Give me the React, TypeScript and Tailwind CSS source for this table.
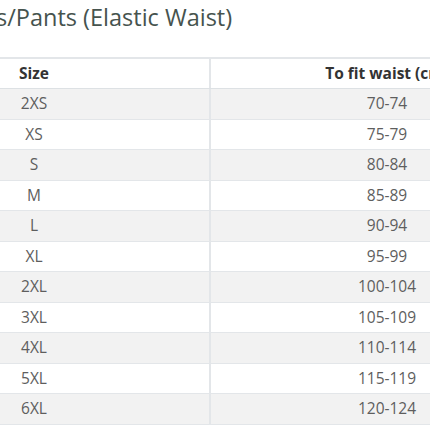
import React from "react";

const rows = [
  ["2XS", "70-74"],
  ["XS", "75-79"],
  ["S", "80-84"],
  ["M", "85-89"],
  ["L", "90-94"],
  ["XL", "95-99"],
  ["2XL", "100-104"],
  ["3XL", "105-109"],
  ["4XL", "110-114"],
  ["5XL", "115-119"],
  ["6XL", "120-124"],
];

export default function App() {
  return (
    <div className="w-[430px] h-[430px] overflow-hidden bg-white font-['Open_Sans',sans-serif]">
      <h2 className="-ml-[4px] h-[57px] text-[23.5px] leading-[34px] text-[#46534e] whitespace-nowrap">s/Pants (Elastic Waist)</h2>
      <div className="-ml-[141px] w-[720px] border-t-2 border-[#e3e6e9]">
        <div className="flex h-[30px] bg-white text-[15.5px] font-bold text-[#333] border-b border-[#dde1e4]">
          <div className="w-[352px] flex items-center justify-center border-r-2 border-[#e3e6e9]">Size</div>
          <div className="w-[352px] flex items-center justify-center whitespace-nowrap">To fit waist (cm)</div>
        </div>
        {rows.map(([size, waist], i) => (
          <div
            key={size}
            className={`flex h-[30.5px] text-[15.5px] text-[#5e5e5e] border-b border-[#e3e6e9] ${i % 2 === 0 ? "bg-[#f2f2f2]" : "bg-white"}`}
          >
            <div className="w-[352px] flex items-center justify-center border-r-2 border-[#e3e6e9]">{size}</div>
            <div className="w-[352px] flex items-center justify-center">{waist}</div>
          </div>
        ))}
      </div>
    </div>
  );
}
